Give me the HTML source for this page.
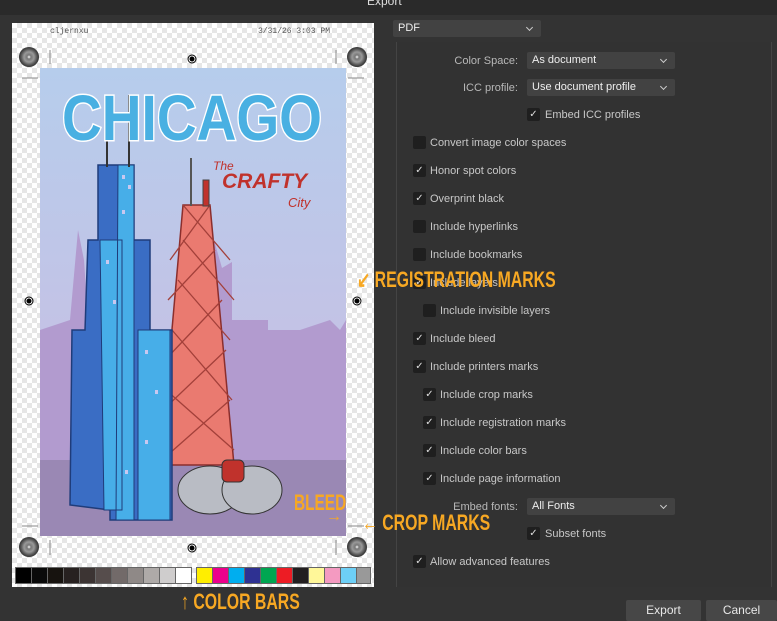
<!DOCTYPE html>
<html><head><meta charset="utf-8"><style>
*{margin:0;padding:0;box-sizing:border-box}
body{width:777px;height:621px;overflow:hidden;background:#333333;font-family:"Liberation Sans",sans-serif;position:relative;color:#cfcfcf}
.a{position:absolute}
.t{position:absolute;font-size:11px;color:#c8c8c8;white-space:nowrap}
.cb{position:absolute;width:13px;height:13px;background:#1f1f1f;border-radius:2px;color:#ddd;font-size:10px;line-height:13px;text-align:center}
.dd{position:absolute;background:#424242;border-radius:2px;height:17px;font-size:11px;color:#eee;padding-left:5px;line-height:17px}
.dd:after{content:"";position:absolute;right:9px;top:5px;width:4px;height:4px;border-right:1px solid #ccc;border-bottom:1px solid #ccc;transform:rotate(45deg)}
.lab{position:absolute;font-size:11px;color:#b8b8b8;text-align:right;width:120px}
.ann{position:absolute;color:#f7a823;font-family:"Liberation Sans Narrow","Liberation Sans",sans-serif;font-weight:bold;white-space:nowrap;transform-origin:left top}
.chk{background-color:#fff;background-image:linear-gradient(45deg,#e6e6e6 25%,transparent 25%,transparent 75%,#e6e6e6 75%),linear-gradient(45deg,#e6e6e6 25%,transparent 25%,transparent 75%,#e6e6e6 75%);background-size:10px 10px;background-position:0 0,5px 5px}
.btn{position:absolute;background:#474747;border-radius:2px;font-size:12px;color:#e8e8e8;text-align:center;line-height:21px}
</style></head><body>
<div class="a" style="left:0;top:0;width:777px;height:15px;background:#2a2a2a"></div>
<div class="t" style="left:367px;top:-6px;font-size:12px;color:#ddd">Export</div>

<div class="a chk" style="left:12px;top:23px;width:362px;height:564px"></div>
<div class="t" style="left:50px;top:27px;font-family:'Liberation Mono',monospace;font-size:8px;color:#555">cljernxu</div>
<div class="t" style="left:258px;top:27px;font-family:'Liberation Mono',monospace;font-size:8px;color:#555">3/31/26 3:03 PM</div>
<svg class="a" style="left:12px;top:23px" width="362" height="564" viewBox="12 23 362 564">
<defs>
<linearGradient id="bg" x1="0" y1="0" x2="0" y2="1"><stop offset="0" stop-color="#b6cdec"/><stop offset="0.55" stop-color="#c3c3e6"/><stop offset="1" stop-color="#c8b4da"/></linearGradient>
<radialGradient id="rm"><stop offset="0" stop-color="#fff"/><stop offset="0.2" stop-color="#777"/><stop offset="0.5" stop-color="#999"/><stop offset="0.8" stop-color="#555"/><stop offset="1" stop-color="#333"/></radialGradient>
</defs>
<rect x="40" y="68" width="306" height="468" fill="url(#bg)"/>
<path d="M40 330 L70 320 L78 230 L84 260 L88 320 L100 318 L100 360 L200 345 L200 230 L214 240 L222 268 L232 262 L232 320 L268 320 L268 330 L300 330 L330 320 L340 330 L346 320 L346 470 L40 470Z" fill="#b29bcf"/>
<rect x="40" y="460" width="306" height="76" fill="#9a88b4"/>
<path d="M183 205 L210 205 L234 465 L160 465Z" fill="#ea7a70" stroke="#8b2e2c" stroke-width="1.5"/>
<path d="M183 205 L230 260 M183 240 L234 300 M178 280 L230 340 M172 330 L232 400 M166 390 L234 450 M210 205 L170 260 M215 250 L168 300 M222 300 L165 360 M226 350 L163 410 M230 400 L162 460" stroke="#a3403a" stroke-width="1.3" fill="none"/>
<rect x="190" y="158" width="2" height="48" fill="#555"/><rect x="203" y="180" width="6" height="26" fill="#c0322c" stroke="#444"/>
<path d="M98 165 L134 165 L134 240 L150 240 L150 330 L172 330 L172 520 L110 520 L110 510 L70 505 L72 330 L85 330 L88 240 L98 240Z" fill="#3a6dc4" stroke="#1f3c7a" stroke-width="1.5"/>
<path d="M118 165 L134 165 L134 520 L116 520Z M100 240 L122 240 L122 510 L104 510Z M138 330 L170 330 L170 520 L138 520Z" fill="#47aee8" stroke="#1f3c7a" stroke-width="1"/>
<g fill="#c8c8f0"><rect x="122" y="175" width="3" height="4"/><rect x="128" y="185" width="3" height="4"/><rect x="122" y="210" width="3" height="4"/><rect x="106" y="260" width="3" height="4"/><rect x="113" y="300" width="3" height="4"/><rect x="145" y="350" width="3" height="4"/><rect x="155" y="390" width="3" height="4"/><rect x="145" y="440" width="3" height="4"/><rect x="125" y="470" width="3" height="4"/></g>
<rect x="106" y="95" width="2" height="72" fill="#333"/><rect x="128" y="95" width="2" height="72" fill="#333"/>
<ellipse cx="210" cy="490" rx="32" ry="24" fill="#b9bcc4" stroke="#333"/><ellipse cx="252" cy="490" rx="30" ry="24" fill="#b9bcc4" stroke="#333"/><rect x="222" y="460" width="22" height="22" rx="5" fill="#c0322c" stroke="#333"/>
<text x="62" y="140" font-family="Liberation Sans" font-weight="bold" font-size="64" fill="#49b0e2" stroke="#fff" stroke-width="3" paint-order="stroke" textLength="260" lengthAdjust="spacingAndGlyphs">CHICAGO</text>
<text x="213" y="170" font-family="Liberation Sans" font-style="italic" font-size="12" fill="#c0322c">The</text>
<text x="222" y="188" font-family="Liberation Sans" font-weight="bold" font-style="italic" font-size="21" fill="#c0322c">CRAFTY</text>
<text x="288" y="207" font-family="Liberation Sans" font-style="italic" font-size="13" fill="#c0322c">City</text>
<circle cx="29" cy="57" r="10" fill="url(#rm)"/><circle cx="357" cy="57" r="10" fill="url(#rm)"/>
<circle cx="29" cy="547" r="10" fill="url(#rm)"/><circle cx="357" cy="547" r="10" fill="url(#rm)"/>
<g stroke="#000" fill="none"><circle cx="192" cy="59" r="4"/><circle cx="29" cy="301" r="4"/><circle cx="357" cy="301" r="4"/><circle cx="192" cy="548" r="4"/></g>
<g fill="#000"><circle cx="192" cy="59" r="2.5"/><circle cx="29" cy="301" r="2.5"/><circle cx="357" cy="301" r="2.5"/><circle cx="192" cy="548" r="2.5"/></g>
<g stroke="#888" stroke-width="1"><line x1="50" y1="50" x2="50" y2="64"/><line x1="336" y1="50" x2="336" y2="64"/><line x1="22" y1="78" x2="38" y2="78"/><line x1="348" y1="78" x2="364" y2="78"/><line x1="22" y1="526" x2="38" y2="526"/><line x1="348" y1="526" x2="364" y2="526"/><line x1="50" y1="540" x2="50" y2="555"/><line x1="336" y1="540" x2="336" y2="555"/></g>
<rect x="15" y="567" width="177" height="17" fill="#666"/><rect x="196" y="567" width="175" height="17" fill="#666"/>
<g>
<rect x="16" y="568" width="15" height="15" fill="#000"/><rect x="32" y="568" width="15" height="15" fill="#0a0a0a"/><rect x="48" y="568" width="15" height="15" fill="#17130f"/><rect x="64" y="568" width="15" height="15" fill="#272120"/><rect x="80" y="568" width="15" height="15" fill="#3c3433"/><rect x="96" y="568" width="15" height="15" fill="#564d4c"/><rect x="112" y="568" width="15" height="15" fill="#726a69"/><rect x="128" y="568" width="15" height="15" fill="#8f8987"/><rect x="144" y="568" width="15" height="15" fill="#aeaaa8"/><rect x="160" y="568" width="15" height="15" fill="#cfcdcd"/><rect x="176" y="568" width="15" height="15" fill="#fff"/>
<rect x="197" y="568" width="15" height="15" fill="#ffee00"/><rect x="213" y="568" width="15" height="15" fill="#ec008c"/><rect x="229" y="568" width="15" height="15" fill="#00aeef"/><rect x="245" y="568" width="15" height="15" fill="#2e3192"/><rect x="261" y="568" width="15" height="15" fill="#00a651"/><rect x="277" y="568" width="15" height="15" fill="#ed1c24"/><rect x="293" y="568" width="15" height="15" fill="#231f20"/><rect x="309" y="568" width="15" height="15" fill="#fff799"/><rect x="325" y="568" width="15" height="15" fill="#f49ac1"/><rect x="341" y="568" width="15" height="15" fill="#6dcff6"/><rect x="357" y="568" width="13" height="15" fill="#999"/>
</g>
</svg>

<div class="dd" style="left:393px;top:20px;width:148px">PDF</div>
<div class="a" style="left:396px;top:42px;width:376px;height:545px;border-left:1px solid #444;border-right:1px solid #444;background:#323232"></div>
<div class="lab" style="left:398px;top:55px">Color Space:</div>
<div class="dd" style="left:527px;top:52px;width:148px">As document</div>
<div class="lab" style="left:398px;top:82px">ICC profile:</div>
<div class="dd" style="left:527px;top:79px;width:148px">Use document profile</div>
<div class="lab" style="left:398px;top:501px">Embed fonts:</div>
<div class="dd" style="left:527px;top:498px;width:148px">All Fonts</div>

<div class="cb" style="left:527px;top:108px">✓</div><div class="t" style="left:545px;top:109px">Embed ICC profiles</div>
<div class="cb" style="left:413px;top:136px"></div><div class="t" style="left:430px;top:137px">Convert image color spaces</div>
<div class="cb" style="left:413px;top:164px">✓</div><div class="t" style="left:430px;top:165px">Honor spot colors</div>
<div class="cb" style="left:413px;top:192px">✓</div><div class="t" style="left:430px;top:193px">Overprint black</div>
<div class="cb" style="left:413px;top:220px"></div><div class="t" style="left:430px;top:221px">Include hyperlinks</div>
<div class="cb" style="left:413px;top:248px"></div><div class="t" style="left:430px;top:249px">Include bookmarks</div>
<div class="cb" style="left:413px;top:276px">✓</div><div class="t" style="left:430px;top:277px">Include layers</div>
<div class="cb" style="left:423px;top:304px"></div><div class="t" style="left:440px;top:305px">Include invisible layers</div>
<div class="cb" style="left:413px;top:332px">✓</div><div class="t" style="left:430px;top:333px">Include bleed</div>
<div class="cb" style="left:413px;top:360px">✓</div><div class="t" style="left:430px;top:361px">Include printers marks</div>
<div class="cb" style="left:423px;top:388px">✓</div><div class="t" style="left:440px;top:389px">Include crop marks</div>
<div class="cb" style="left:423px;top:416px">✓</div><div class="t" style="left:440px;top:417px">Include registration marks</div>
<div class="cb" style="left:423px;top:444px">✓</div><div class="t" style="left:440px;top:445px">Include color bars</div>
<div class="cb" style="left:423px;top:472px">✓</div><div class="t" style="left:440px;top:473px">Include page information</div>
<div class="cb" style="left:527px;top:527px">✓</div><div class="t" style="left:545px;top:528px">Subset fonts</div>
<div class="cb" style="left:413px;top:555px">✓</div><div class="t" style="left:430px;top:556px">Allow advanced features</div>

<div class="btn" style="left:626px;top:600px;width:75px;height:21px">Export</div>
<div class="btn" style="left:706px;top:600px;width:71px;height:21px">Cancel</div>

<div class="ann" style="left:357px;top:267px;font-size:22px;transform:scaleX(0.72)">↙ REGISTRATION MARKS</div>
<div class="ann" style="left:294px;top:490px;font-size:22px;transform:scaleX(0.7)">BLEED</div>
<div class="ann" style="left:326px;top:508px;font-size:16px">→</div>
<div class="ann" style="left:362px;top:510px;font-size:22px;transform:scaleX(0.72)">← CROP MARKS</div>
<div class="ann" style="left:181px;top:589px;font-size:22px;transform:scaleX(0.72)">↑ COLOR BARS</div>
</body></html>
